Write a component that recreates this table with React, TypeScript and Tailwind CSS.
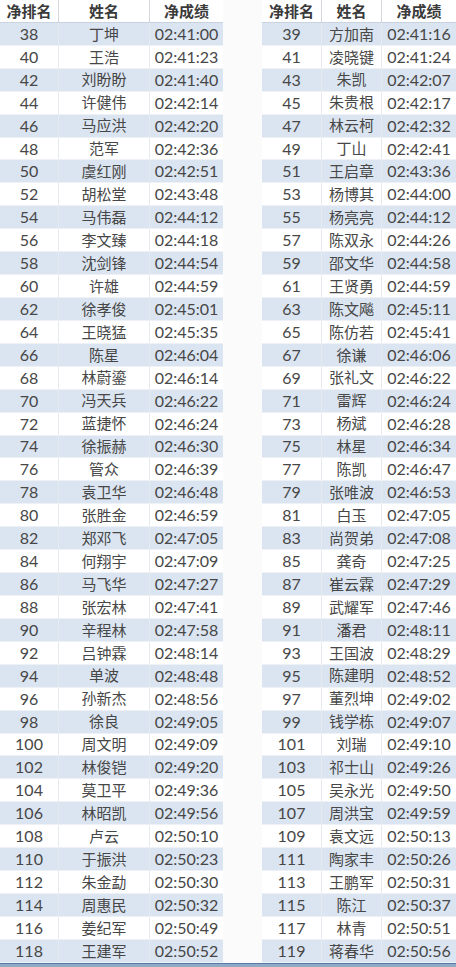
import React from 'react';

type Row = [string, string, string];

const left: Row[] = [
  ['38', '丁坤', '02:41:00'],
  ['40', '王浩', '02:41:23'],
  ['42', '刘盼盼', '02:41:40'],
  ['44', '许健伟', '02:42:14'],
  ['46', '马应洪', '02:42:20'],
  ['48', '范军', '02:42:36'],
  ['50', '虞红刚', '02:42:51'],
  ['52', '胡松堂', '02:43:48'],
  ['54', '马伟磊', '02:44:12'],
  ['56', '李文臻', '02:44:18'],
  ['58', '沈剑锋', '02:44:54'],
  ['60', '许雄', '02:44:59'],
  ['62', '徐孝俊', '02:45:01'],
  ['64', '王晓猛', '02:45:35'],
  ['66', '陈星', '02:46:04'],
  ['68', '林蔚鎏', '02:46:14'],
  ['70', '冯天兵', '02:46:22'],
  ['72', '蓝捷怀', '02:46:24'],
  ['74', '徐振赫', '02:46:30'],
  ['76', '管众', '02:46:39'],
  ['78', '袁卫华', '02:46:48'],
  ['80', '张胜金', '02:46:59'],
  ['82', '郑邓飞', '02:47:05'],
  ['84', '何翔宇', '02:47:09'],
  ['86', '马飞华', '02:47:27'],
  ['88', '张宏林', '02:47:41'],
  ['90', '辛程林', '02:47:58'],
  ['92', '吕钟霖', '02:48:14'],
  ['94', '单波', '02:48:48'],
  ['96', '孙新杰', '02:48:56'],
  ['98', '徐良', '02:49:05'],
  ['100', '周文明', '02:49:09'],
  ['102', '林俊铠', '02:49:20'],
  ['104', '莫卫平', '02:49:36'],
  ['106', '林昭凯', '02:49:56'],
  ['108', '卢云', '02:50:10'],
  ['110', '于振洪', '02:50:23'],
  ['112', '朱金勐', '02:50:30'],
  ['114', '周惠民', '02:50:32'],
  ['116', '姜纪军', '02:50:49'],
  ['118', '王建军', '02:50:52'],
];

const right: Row[] = [
  ['39', '方加南', '02:41:16'],
  ['41', '凌晓键', '02:41:24'],
  ['43', '朱凯', '02:42:07'],
  ['45', '朱贵根', '02:42:17'],
  ['47', '林云柯', '02:42:32'],
  ['49', '丁山', '02:42:41'],
  ['51', '王启章', '02:43:36'],
  ['53', '杨博其', '02:44:00'],
  ['55', '杨亮亮', '02:44:12'],
  ['57', '陈双永', '02:44:26'],
  ['59', '邵文华', '02:44:58'],
  ['61', '王贤勇', '02:44:59'],
  ['63', '陈文飚', '02:45:11'],
  ['65', '陈仿若', '02:45:41'],
  ['67', '徐谦', '02:46:06'],
  ['69', '张礼文', '02:46:22'],
  ['71', '雷辉', '02:46:24'],
  ['73', '杨斌', '02:46:28'],
  ['75', '林星', '02:46:34'],
  ['77', '陈凯', '02:46:47'],
  ['79', '张唯波', '02:46:53'],
  ['81', '白玉', '02:47:05'],
  ['83', '尚贺弟', '02:47:08'],
  ['85', '龚奇', '02:47:25'],
  ['87', '崔云霖', '02:47:29'],
  ['89', '武耀军', '02:47:46'],
  ['91', '潘君', '02:48:11'],
  ['93', '王国波', '02:48:29'],
  ['95', '陈建明', '02:48:52'],
  ['97', '董烈坤', '02:49:02'],
  ['99', '钱学栋', '02:49:07'],
  ['101', '刘瑞', '02:49:10'],
  ['103', '祁士山', '02:49:26'],
  ['105', '吴永光', '02:49:50'],
  ['107', '周洪宝', '02:49:59'],
  ['109', '袁文远', '02:50:13'],
  ['111', '陶家丰', '02:50:26'],
  ['113', '王鹏军', '02:50:31'],
  ['115', '陈江', '02:50:37'],
  ['117', '林青', '02:50:51'],
  ['119', '蒋春华', '02:50:56'],
];

const font = { fontFamily: '"Lato", "Noto Sans CJK SC", sans-serif' };

const ResultTable: React.FC<{ rows: Row[]; widths: [string, string, string] }> = ({ rows, widths }) => {
  return (
    <div className="flex flex-col">
      <div className="flex h-[22.93px] bg-white border-b border-[#c9d3df]">
        <div className={`${widths[0]} flex items-center justify-center border-r border-[#d4d8de] text-[15px] font-bold text-[#3a3a3a]`}>净排名</div>
        <div className={`${widths[1]} flex items-center justify-center border-r border-[#d4d8de] text-[15px] font-bold text-[#3a3a3a]`}>姓名</div>
        <div className={`${widths[2]} flex items-center justify-center text-[15px] font-bold text-[#3a3a3a]`}>净成绩</div>
      </div>
      {rows.map((r, i) => (
        <div
          key={r[0]}
          className={`flex h-[22.93px] border-b border-[#eef1f5] ${i % 2 === 0 ? 'bg-[#dbe5f1]' : 'bg-white'}`}
        >
          <div className={`${widths[0]} flex items-center justify-center border-r border-[#e6e9ee] text-[16px] text-[#474747]`}>{r[0]}</div>
          <div className={`${widths[1]} flex items-center justify-center border-r border-[#e6e9ee] text-[15px] text-[#474747]`}>{r[1]}</div>
          <div className={`${widths[2]} flex items-center justify-center text-[16px] text-[#474747]`}>{r[2]}</div>
        </div>
      ))}
    </div>
  );
};

export default function App() {
  return (
    <div className="w-[456px] h-[967px] overflow-hidden bg-white" style={font}>
      <div className="flex h-[963px] overflow-hidden">
        <div className="w-[223px]">
          <ResultTable rows={left} widths={['w-[59px]', 'w-[91px]', 'w-[73px]']} />
        </div>
        <div className="w-[39px] h-[963px] bg-[#fbfbfc]" />
        <div className="w-[194px]">
          <ResultTable rows={right} widths={['w-[60px]', 'w-[60px]', 'w-[74px]']} />
        </div>
      </div>
      <div className="h-[4px] bg-[#8fa9c9] border-t border-[#5b7aa3]" />
    </div>
  );
}
